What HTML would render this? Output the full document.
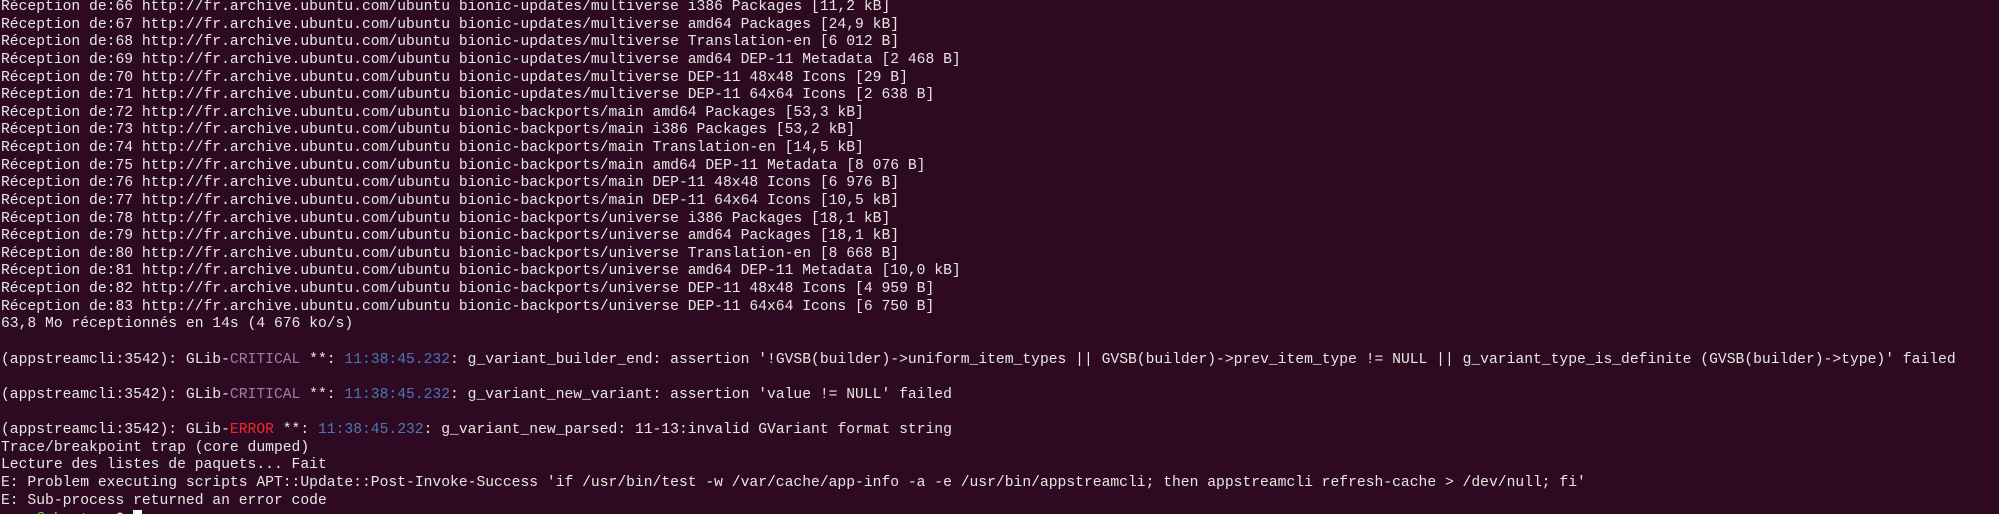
<!DOCTYPE html>
<html><head><meta charset="utf-8"><style>
html,body{margin:0;padding:0;background:#2d0a22;width:1999px;height:514px;overflow:hidden}
pre{margin:0;padding:0 0 0 1px;position:relative;top:-1px;font-family:"Liberation Mono",monospace;font-size:14.68px;line-height:17.62px;color:#e8e8e2;white-space:pre}
.c{color:#a57aa3}.e{color:#ef2929}.t{color:#4a78b6}.g{color:#8ae234}
.cur{display:inline-block;width:9px;height:15px;background:#fff;vertical-align:-2px}
</style></head><body><pre>Réception de:66 http://fr.archive.ubuntu.com/ubuntu bionic-updates/multiverse i386 Packages [11,2 kB]
Réception de:67 http://fr.archive.ubuntu.com/ubuntu bionic-updates/multiverse amd64 Packages [24,9 kB]
Réception de:68 http://fr.archive.ubuntu.com/ubuntu bionic-updates/multiverse Translation-en [6 012 B]
Réception de:69 http://fr.archive.ubuntu.com/ubuntu bionic-updates/multiverse amd64 DEP-11 Metadata [2 468 B]
Réception de:70 http://fr.archive.ubuntu.com/ubuntu bionic-updates/multiverse DEP-11 48x48 Icons [29 B]
Réception de:71 http://fr.archive.ubuntu.com/ubuntu bionic-updates/multiverse DEP-11 64x64 Icons [2 638 B]
Réception de:72 http://fr.archive.ubuntu.com/ubuntu bionic-backports/main amd64 Packages [53,3 kB]
Réception de:73 http://fr.archive.ubuntu.com/ubuntu bionic-backports/main i386 Packages [53,2 kB]
Réception de:74 http://fr.archive.ubuntu.com/ubuntu bionic-backports/main Translation-en [14,5 kB]
Réception de:75 http://fr.archive.ubuntu.com/ubuntu bionic-backports/main amd64 DEP-11 Metadata [8 076 B]
Réception de:76 http://fr.archive.ubuntu.com/ubuntu bionic-backports/main DEP-11 48x48 Icons [6 976 B]
Réception de:77 http://fr.archive.ubuntu.com/ubuntu bionic-backports/main DEP-11 64x64 Icons [10,5 kB]
Réception de:78 http://fr.archive.ubuntu.com/ubuntu bionic-backports/universe i386 Packages [18,1 kB]
Réception de:79 http://fr.archive.ubuntu.com/ubuntu bionic-backports/universe amd64 Packages [18,1 kB]
Réception de:80 http://fr.archive.ubuntu.com/ubuntu bionic-backports/universe Translation-en [8 668 B]
Réception de:81 http://fr.archive.ubuntu.com/ubuntu bionic-backports/universe amd64 DEP-11 Metadata [10,0 kB]
Réception de:82 http://fr.archive.ubuntu.com/ubuntu bionic-backports/universe DEP-11 48x48 Icons [4 959 B]
Réception de:83 http://fr.archive.ubuntu.com/ubuntu bionic-backports/universe DEP-11 64x64 Icons [6 750 B]
63,8 Mo réceptionnés en 14s (4 676 ko/s)

(appstreamcli:3542): GLib-<span class="c">CRITICAL</span> **: <span class="t">11:38:45.232</span>: g_variant_builder_end: assertion '!GVSB(builder)-&gt;uniform_item_types || GVSB(builder)-&gt;prev_item_type != NULL || g_variant_type_is_definite (GVSB(builder)-&gt;type)' failed

(appstreamcli:3542): GLib-<span class="c">CRITICAL</span> **: <span class="t">11:38:45.232</span>: g_variant_new_variant: assertion 'value != NULL' failed

(appstreamcli:3542): GLib-<span class="e">ERROR</span> **: <span class="t">11:38:45.232</span>: g_variant_new_parsed: 11-13:invalid GVariant format string
Trace/breakpoint trap (core dumped)
Lecture des listes de paquets... Fait
E: Problem executing scripts APT::Update::Post-Invoke-Success 'if /usr/bin/test -w /var/cache/app-info -a -e /usr/bin/appstreamcli; then appstreamcli refresh-cache &gt; /dev/null; fi'
E: Sub-process returned an error code
<span class="g">user@ubuntu</span>:<span class="t">~</span>$ <span class="cur"></span></pre></body></html>
